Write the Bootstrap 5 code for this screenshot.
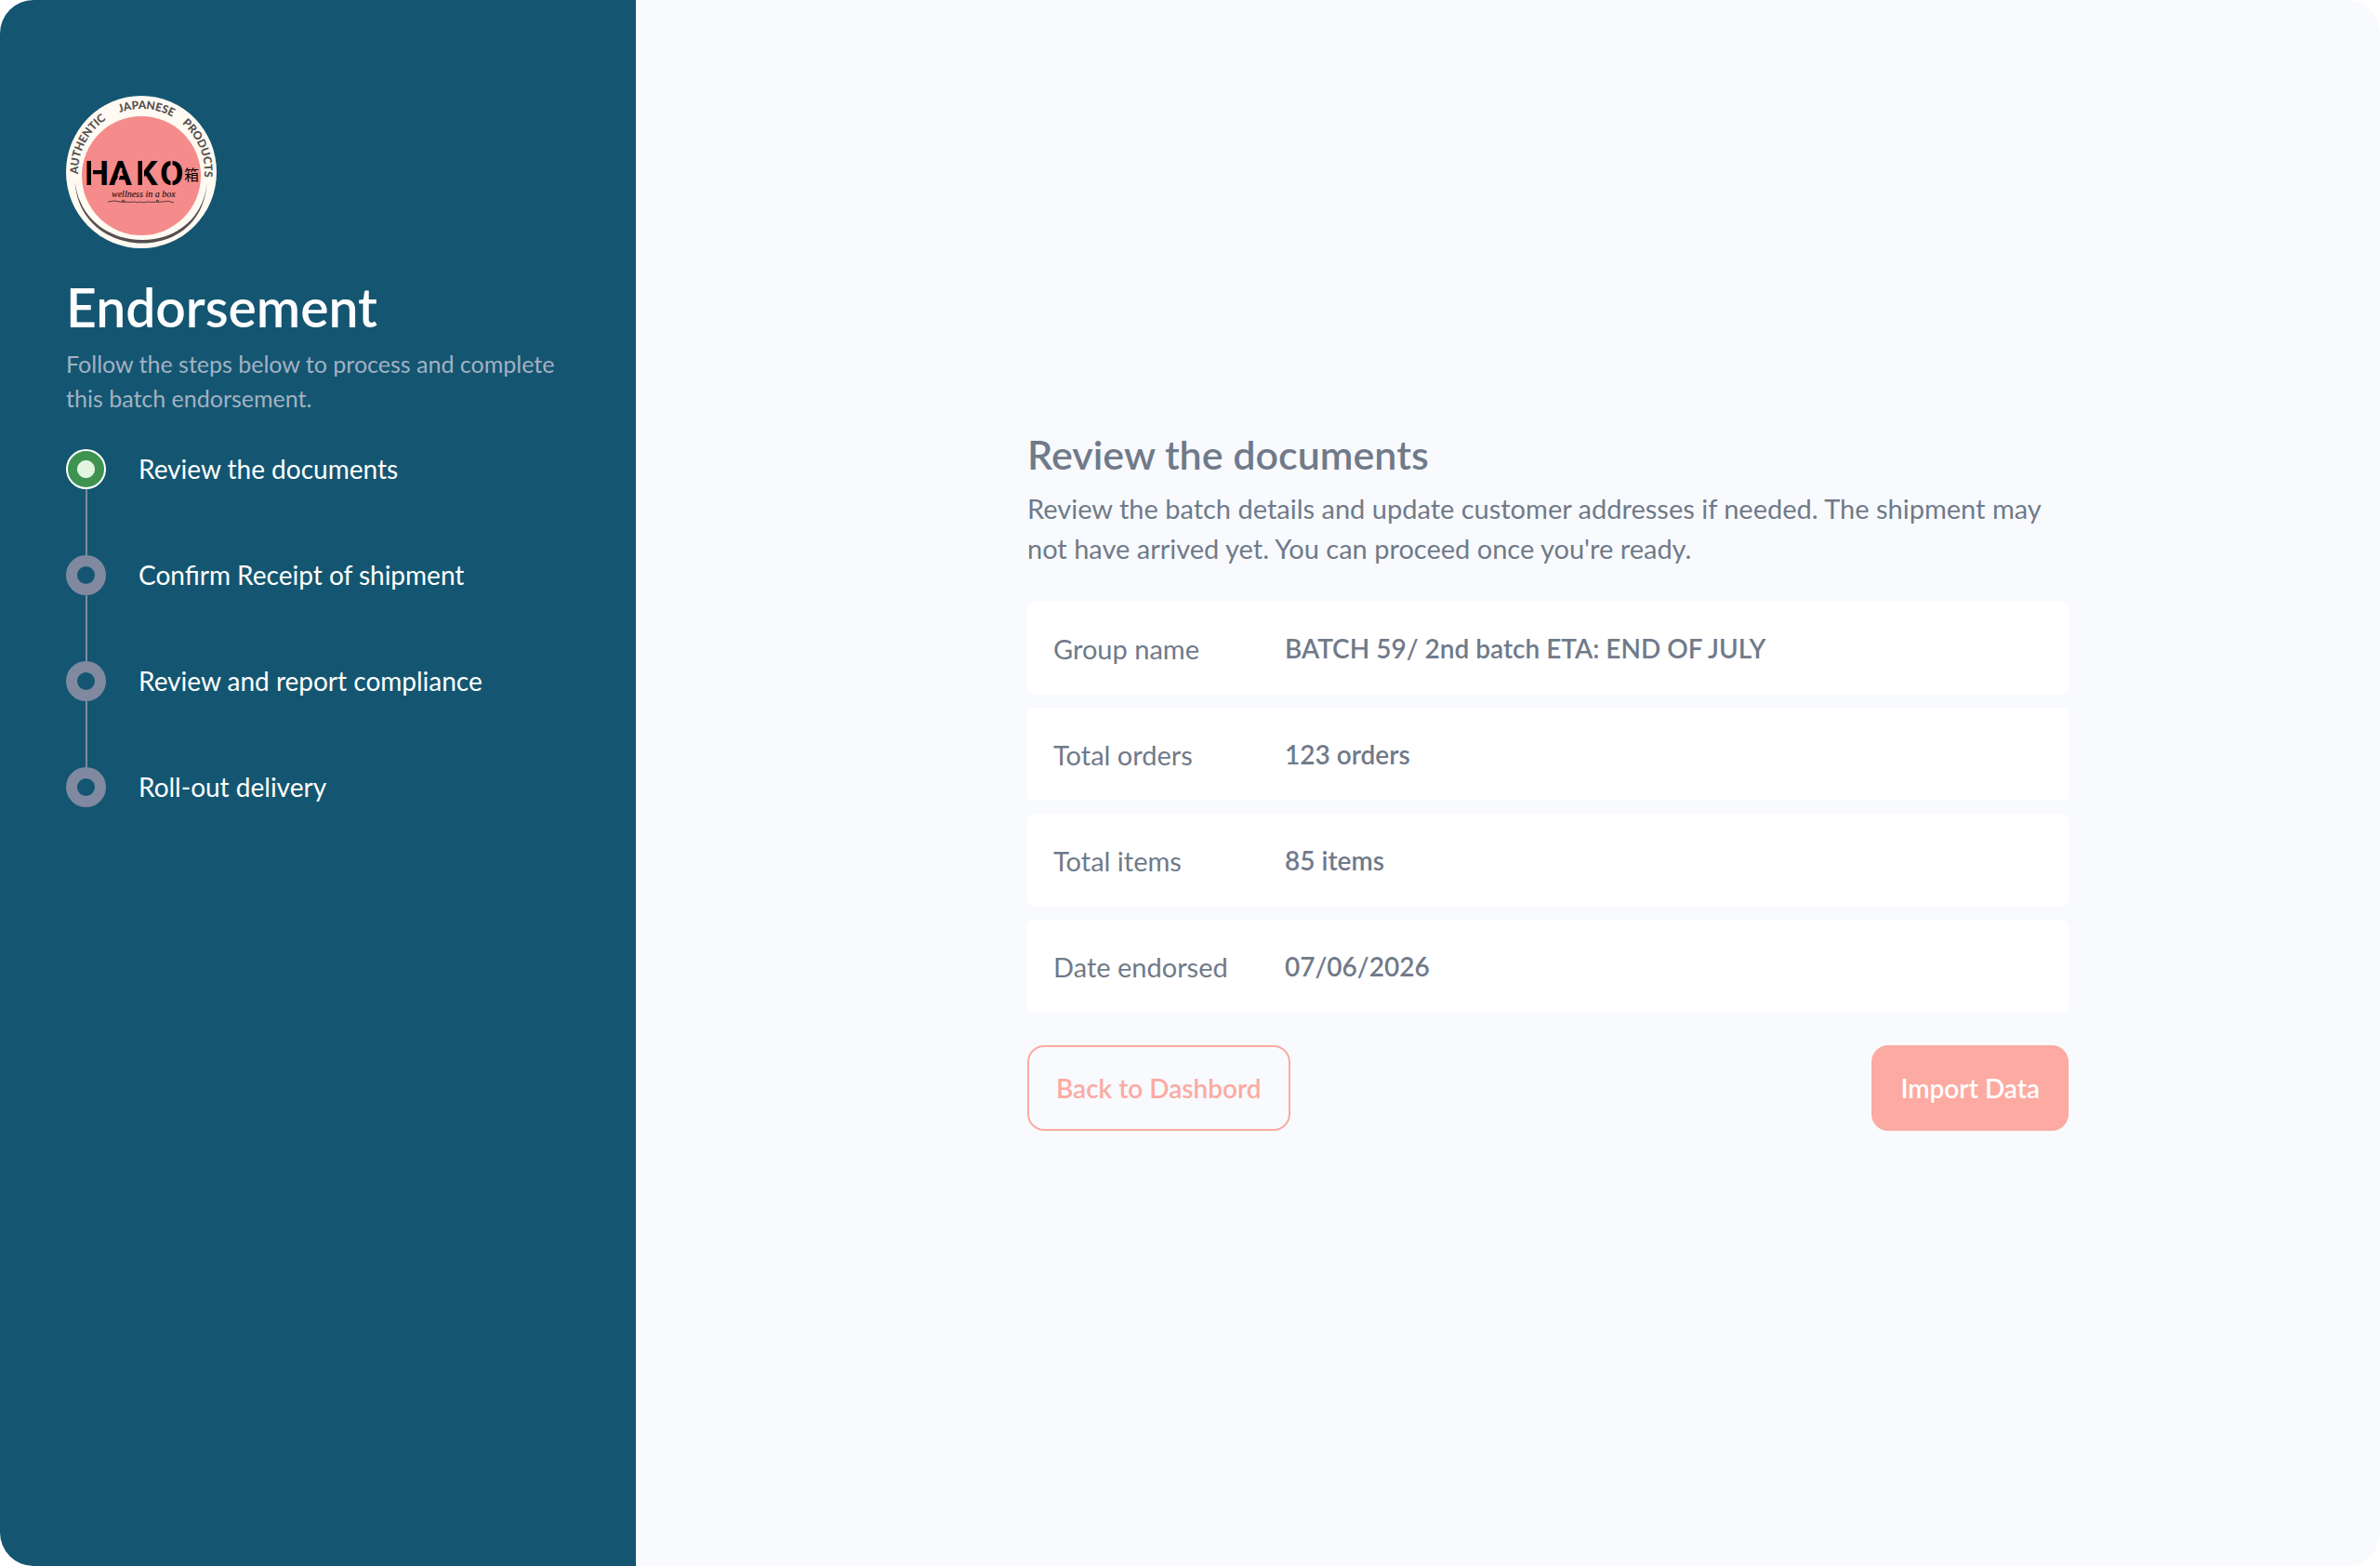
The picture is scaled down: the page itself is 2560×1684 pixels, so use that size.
<!DOCTYPE html>
<html lang="en">
<head>
<meta charset="utf-8">
<meta name="viewport" content="width=device-width, initial-scale=1">
<title>Endorsement</title>
<link href="https://cdn.jsdelivr.net/npm/bootstrap@5.3.0/dist/css/bootstrap.min.css" rel="stylesheet">
<style>
  body { font-family: Lato, "Noto Sans CJK JP", sans-serif; font-size: 28px; line-height: 43px; color: #707a89; background: #fff; }
  .app-shell { border-radius: 36px; background: #f8fafe; }
  .side-panel { flex: 0 0 684px; padding: 103px 71px; background: #145671; }
  .brand-logo { width: 162px; height: 164px; }
  .side-title { margin: 27px 0 7px; font-size: 57px; line-height: 72px; font-weight: 600; color: #fff; }
  .side-intro { margin: 0 0 36px; font-size: 25px; line-height: 37px; color: #a3b1c3; }
  .step-item { gap: 35px; padding-bottom: 71px; color: #fff; position: relative; }
  .step-item:not(:last-child)::after { content: ""; position: absolute; left: 21px; top: 43px; bottom: 0; width: 2px; background: #8089a0; }
  .step-dot { flex: none; width: 43px; height: 43px; border: 12px solid #8089a0; border-radius: 50%; }
  .step-dot.is-current { border: 2px solid #fff; background: radial-gradient(circle, #e2f5de 9px, #3f9350 10px); }
  .main-panel { padding-left: 86px; }
  .review-box { width: 100%; max-width: 1120px; }
  .review-title { margin: 0 0 15px; font-size: 43px; line-height: 42px; font-weight: 600; }
  .review-text { margin: 0 0 36px; font-size: 29px; }
  .detail-list { gap: 14px; margin: 0 0 35px; }
  .detail-row { padding: 28px; min-height: 100px; border-radius: 7px; background: #fff; }
  .detail-row dt { flex: 0 0 249px; font-size: 29px; font-weight: 400; }
  .detail-row dd { margin: 0; font-weight: 600; }
  .action-btn { padding: 23px 29px; font-size: 28px; line-height: 42px; font-weight: 600; border: 2px solid #fcaaa2; border-radius: 18px; }
  .action-outline { color: #fcaaa2; }
  .action-solid { color: #fff; background: #fcaaa2; }
</style>
</head>
<body>
<div class="app-shell d-flex min-vh-100 overflow-hidden">
  <aside class="side-panel">
    <svg class="brand-logo d-block" viewBox="0 0 162 164" role="img" aria-label="Hako">
      <defs><path id="ring" d="M13.400 89.100A68 68 0 0 1 81 14A68 68 0 0 1 148.600 89.100"/></defs>
      <ellipse cx="81" cy="82" rx="81" ry="82" fill="#fffaf2"/>
      <circle cx="81" cy="86" r="64" fill="#f58b8b"/>
      <g fill="#55504f" font-family="Lato" font-size="12" font-weight="900">
        <text><textPath href="#ring" startOffset="5">AUTHENTIC</textPath></text>
        <text><textPath href="#ring" startOffset="90">JAPANESE</textPath></text>
        <text><textPath href="#ring" startOffset="161">PRODUCTS</textPath></text>
      </g>
      <path d="M9.500 92C14 132 46 155 82 155S148 132 151.500 94C149 136 118 158.500 82 158.500S12 135 9.500 92Z" fill="#55504f"/>
      <text x="20 46 75 101" y="96" font-family="Roboto" font-size="37" font-weight="700">HAKO</text>
      <path d="M28 68V98M113.500 68V77M113.500 90V98M83 68V98M55 92L60 78" stroke="#f58b8b" stroke-width="2"/>
      <text x="127" y="91" font-family="Noto Sans CJK JP" font-size="16">箱</text>
      <text x="49" y="109" font-family="Liberation Serif" font-style="italic" font-size="10">wellness in a box</text>
      <path d="M45 114Q52 112 58 114Q64 115 63 113Q61 111 60 113Q61 115 75 114L77 115L79 114L84 115L86 114Q99 115 100 113Q99 111 97 113Q97 115 103 114Q110 112 116 115" fill="none" stroke="#3b2527" stroke-width=".8"/>
    </svg>
    <h1 class="side-title">Endorsement</h1>
    <p class="side-intro">Follow the steps below to process and complete this batch endorsement.</p>
    <ol class="list-unstyled mb-0">
      <li class="step-item d-flex" aria-current="step"><span class="step-dot is-current"></span><span>Review the documents</span></li>
      <li class="step-item d-flex"><span class="step-dot"></span><span>Confirm Receipt of shipment</span></li>
      <li class="step-item d-flex"><span class="step-dot"></span><span>Review and report compliance</span></li>
      <li class="step-item d-flex"><span class="step-dot"></span><span>Roll-out delivery</span></li>
    </ol>
  </aside>
  <main class="main-panel flex-grow-1 d-flex align-items-center justify-content-center">
    <section class="review-box">
      <h2 class="review-title">Review the documents</h2>
      <p class="review-text">Review the batch details and update customer addresses if needed. The shipment may not have arrived yet. You can proceed once you're ready.</p>
      <dl class="detail-list d-flex flex-column">
        <div class="detail-row d-flex align-items-center"><dt>Group name</dt><dd>BATCH 59/ 2nd batch ETA: END OF JULY</dd></div>
        <div class="detail-row d-flex align-items-center"><dt>Total orders</dt><dd>123 orders</dd></div>
        <div class="detail-row d-flex align-items-center"><dt>Total items</dt><dd>85 items</dd></div>
        <div class="detail-row d-flex align-items-center"><dt>Date endorsed</dt><dd>07/06/2026</dd></div>
      </dl>
      <div class="d-flex justify-content-between">
        <button type="button" class="btn action-btn action-outline">Back to Dashbord</button>
        <button type="button" class="btn action-btn action-solid">Import Data</button>
      </div>
    </section>
  </main>
</div>
<script src="https://cdn.jsdelivr.net/npm/bootstrap@5.3.0/dist/js/bootstrap.bundle.min.js"></script>
</body>
</html>
